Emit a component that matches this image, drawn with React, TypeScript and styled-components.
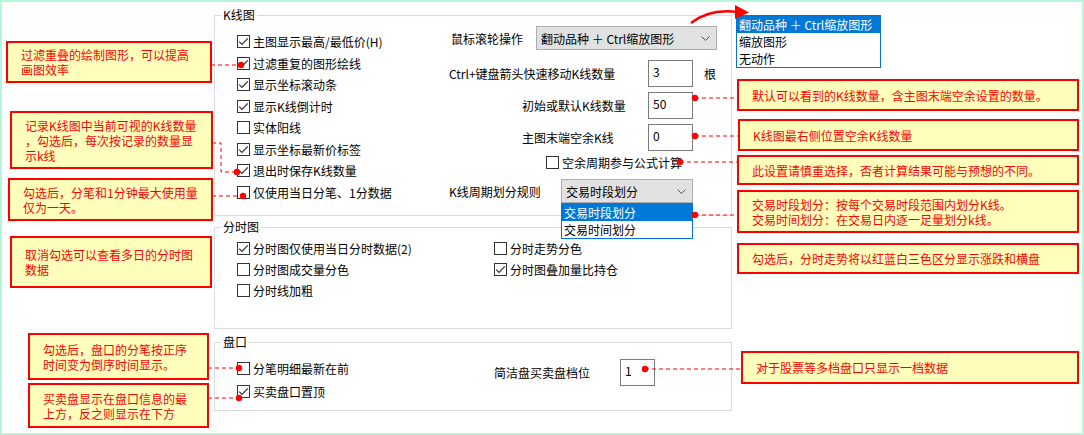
import React from "react";
import styled, { createGlobalStyle } from "styled-components";

const GlobalStyle = createGlobalStyle`
  html, body { margin: 0; padding: 0; background: #fff; }
  body {
    font-family: "Noto Sans CJK SC", "Noto Sans", sans-serif;
    font-size: 12px;
    color: #000;
  }
  * { box-sizing: border-box; }
`;

const Canvas = styled.div`
  position: relative;
  width: 1084px;
  height: 435px;
  border: 2px solid #b5f5d9;
  background: #fff;
  overflow: hidden;
`;

/* settings dialog, laid out by flow */
const Dialog = styled.div`
  margin-left: 212px;
  padding-top: 5px;
  width: 518px;
  display: flex;
  flex-direction: column;
`;

const Group = styled.fieldset<{ $h: number; $mt?: number }>`
  margin: ${(p) => p.$mt ?? 0}px 0 0;
  padding: 0;
  min-width: 0;
  height: ${(p) => p.$h}px;
  border: 1px solid #dcdcdc;
`;

const Legend = styled.legend`
  margin-left: 6px;
  padding: 0 2px;
  line-height: 16px;
  font-size: 12px;
`;

const GroupBody = styled.div`
  display: flex;
`;

const Col = styled.div<{ $w?: number; $pl?: number; $pt?: number }>`
  display: flex;
  flex-direction: column;
  width: ${(p) => (p.$w ? `${p.$w}px` : "auto")};
  padding-left: ${(p) => p.$pl ?? 0}px;
  padding-top: ${(p) => p.$pt ?? 0}px;
`;

const Row = styled.div<{ $h: number; $pl?: number; $mt?: number }>`
  display: flex;
  align-items: center;
  gap: 3px;
  height: ${(p) => p.$h}px;
  padding-left: ${(p) => p.$pl ?? 0}px;
  margin-top: ${(p) => p.$mt ?? 0}px;
  white-space: nowrap;
`;

const Box = styled.span`
  display: inline-flex;
  align-items: center;
  justify-content: center;
  width: 13px;
  height: 13px;
  border: 1px solid #333;
  background: #fff;
  flex: none;
`;

const Field = styled.div<{ $mt: number }>`
  display: flex;
  align-items: center;
  margin-top: ${(p) => p.$mt}px;
  position: relative;
  white-space: nowrap;
`;

const Label = styled.span<{ $w: number; $indent?: number }>`
  width: ${(p) => p.$w}px;
  padding-left: ${(p) => p.$indent ?? 0}px;
  flex: none;
`;

const Input = styled.div<{ $w: number }>`
  width: ${(p) => p.$w}px;
  height: 27px;
  border: 1px solid #7a7a7a;
  background: #fff;
  padding: 3px 0 0 4px;
  line-height: 16px;
  flex: none;
`;

const Unit = styled.span`
  margin-left: 11px;
`;

const Combo = styled.div<{ $w: number }>`
  position: relative;
  display: flex;
  align-items: center;
  justify-content: space-between;
  width: ${(p) => p.$w}px;
  height: 24px;
  padding: 0 6px 0 4px;
  background: #e1e1e1;
  border: 1px solid #adadad;
  flex: none;
`;

const DropList = styled.div<{ $w: number }>`
  position: absolute;
  z-index: 3;
  width: ${(p) => p.$w}px;
  border: 1px solid #0078d7;
  background: #fff;
  padding: 0;
`;

const UnderCombo = styled(DropList)`
  top: 23px;
  left: -1px;
`;

const FloatingList = styled(DropList)`
  top: 13px;
  left: 734px;
`;

const Option = styled.div<{ $sel?: boolean }>`
  height: 17px;
  line-height: 17px;
  padding-left: 2px;
  background: ${(p) => (p.$sel ? "#0078d7" : "transparent")};
  color: ${(p) => (p.$sel ? "#fff" : "#000")};
  white-space: nowrap;
`;

/* callouts placed over the canvas */
const Note = styled.div<{ $x: number; $y: number; $w: number; $h: number }>`
  position: absolute;
  z-index: 2;
  left: ${(p) => p.$x - 2}px;
  top: ${(p) => p.$y - 2}px;
  width: ${(p) => p.$w}px;
  height: ${(p) => p.$h}px;
  display: flex;
  align-items: center;
  padding: 0 0 0 13px;
  background: #ffffbb;
  border: 2px solid #ff0000;
  color: #ff0000;
  font-size: 12px;
  line-height: 15px;
  white-space: nowrap;
`;

const Wires = styled.svg`
  position: absolute;
  z-index: 4;
  left: -2px;
  top: -2px;
  pointer-events: none;
`;

const Chevron = () => (
  <svg width="9" height="5" viewBox="0 0 9 5">
    <path d="M0.5 0.5 L4.5 4.5 L8.5 0.5" fill="none" stroke="#555" strokeWidth="1" />
  </svg>
);

const Check = ({ label, on, h = 21.5, pl, mt }: { label: string; on?: boolean; h?: number; pl?: number; mt?: number }) => (
  <Row $h={h} $pl={pl} $mt={mt}>
    <Box>
      {on && (
        <svg width="11" height="11" viewBox="0 0 11 11">
          <path d="M1.2 5.6 L4 8.4 L9.8 2.4" fill="none" stroke="#333" strokeWidth="1.3" />
        </svg>
      )}
    </Box>
    <span>{label}</span>
  </Row>
);

const wires: { d: string; dot: [number, number] }[] = [
  { d: "M211 65 H241", dot: [241, 65] },
  { d: "M212 143 H221 V172 H237", dot: [237, 172] },
  { d: "M212 196 H243", dot: [243, 196] },
  { d: "M208 368 H239", dot: [239, 368] },
  { d: "M208 398 H239", dot: [239, 398] },
  { d: "M695 98 H737", dot: [695, 98] },
  { d: "M695 136 H738", dot: [695, 136] },
  { d: "M680 162 H737", dot: [680, 162] },
  { d: "M695 215 H737", dot: [695, 215] },
  { d: "M645 369 H741", dot: [645, 369] },
];

export default function App() {
  return (
    <>
      <GlobalStyle />
      <Canvas>
        <Dialog>
          <Group $h={209}>
            <Legend>K线图</Legend>
            <GroupBody>
              <Col $w={234} $pl={22} $pt={8}>
                <Check on label="主图显示最高/最低价(H)" />
                <Check on label="过滤重复的图形绘线" />
                <Check on label="显示坐标滚动条" />
                <Check on label="显示K线倒计时" />
                <Check label="实体阳线" />
                <Check on label="显示坐标最新价标签" />
                <Check on label="退出时保存K线数量" />
                <Check label="仅使用当日分笔、1分数据" />
              </Col>
              <Col>
                <Field $mt={3}>
                  <Label $w={87} $indent={2}>鼠标滚轮操作</Label>
                  <Combo $w={181}>
                    <span>翻动品种 ＋ Ctrl缩放图形</span>
                    <Chevron />
                  </Combo>
                </Field>
                <Field $mt={10}>
                  <Label $w={199}>Ctrl+键盘箭头快速移动K线数量</Label>
                  <Input $w={45}>3</Input>
                  <Unit>根</Unit>
                </Field>
                <Field $mt={5}>
                  <Label $w={199} $indent={73}>初始或默认K线数量</Label>
                  <Input $w={45}>50</Input>
                </Field>
                <Field $mt={5}>
                  <Label $w={199} $indent={73}>主图末端空余K线</Label>
                  <Input $w={45}>0</Input>
                </Field>
                <Check h={16} pl={97} mt={3} label="空余周期参与公式计算" />
                <Field $mt={9}>
                  <Label $w={112}>K线周期划分规则</Label>
                  <Combo $w={132}>
                    <span>交易时段划分</span>
                    <Chevron />
                    <UnderCombo $w={132}>
                      <Option $sel>交易时段划分</Option>
                      <Option>交易时间划分</Option>
                    </UnderCombo>
                  </Combo>
                </Field>
              </Col>
            </GroupBody>
          </Group>

          <Group $h={110} $mt={3}>
            <Legend>分时图</Legend>
            <GroupBody>
              <Col $w={279} $pl={22} $pt={2.5}>
                <Check h={21} on label="分时图仅使用当日分时数据(2)" />
                <Check h={21} label="分时图成交量分色" />
                <Check h={21} label="分时线加粗" />
              </Col>
              <Col $pt={2.5}>
                <Check h={21} label="分时走势分色" />
                <Check h={21} on label="分时图叠加量比持仓" />
              </Col>
            </GroupBody>
          </Group>

          <Group $h={77} $mt={5}>
            <Legend>盘口</Legend>
            <GroupBody>
              <Col $w={279} $pl={22} $pt={6.5}>
                <Check h={23} label="分笔明细最新在前" />
                <Check h={23} on label="买卖盘口置顶" />
              </Col>
              <Col $pt={9}>
                <Field $mt={0}>
                  <Label $w={126}>简洁盘买卖盘档位</Label>
                  <Input $w={35}>1</Input>
                </Field>
              </Col>
            </GroupBody>
          </Group>
        </Dialog>

        <FloatingList $w={145}>
          <Option $sel>翻动品种 ＋ Ctrl缩放图形</Option>
          <Option>缩放图形</Option>
          <Option>无动作</Option>
        </FloatingList>

        <Note $x={6} $y={41} $w={206} $h={42}>
          <div>过滤重叠的绘制图形，可以提高<br />画图效率</div>
        </Note>
        <Note $x={10} $y={111} $w={203} $h={58}>
          <div>记录K线图中当前可视的K线数量<br />，勾选后，每次按记录的数量显<br />示k线</div>
        </Note>
        <Note $x={8} $y={178} $w={205} $h={43}>
          <div>勾选后，分笔和1分钟最大使用量<br />仅为一天。</div>
        </Note>
        <Note $x={10} $y={236} $w={202} $h={52}>
          <div>取消勾选可以查看多日的分时图<br />数据</div>
        </Note>
        <Note $x={28} $y={333} $w={181} $h={47}>
          <div>勾选后，盘口的分笔按正序<br />时间变为倒序时间显示。</div>
        </Note>
        <Note $x={28} $y={383} $w={181} $h={45}>
          <div>买卖盘显示在盘口信息的最<br />上方，反之则显示在下方</div>
        </Note>

        <Note $x={737} $y={79} $w={342} $h={32}>
          <div>默认可以看到的K线数量，含主图末端空余设置的数量。</div>
        </Note>
        <Note $x={738} $y={119} $w={341} $h={32}>
          <div>K线图最右侧位置空余K线数量</div>
        </Note>
        <Note $x={737} $y={155} $w={342} $h={30}>
          <div>此设置请慎重选择，否者计算结果可能与预想的不同。</div>
        </Note>
        <Note $x={737} $y={190} $w={342} $h={43}>
          <div>交易时段划分：按每个交易时段范围内划分K线。<br />交易时间划分：在交易日内逐一足量划分k线。</div>
        </Note>
        <Note $x={737} $y={243} $w={342} $h={31}>
          <div>勾选后，分时走势将以红蓝白三色区分显示涨跌和横盘</div>
        </Note>
        <Note $x={741} $y={351} $w={338} $h={33}>
          <div>对于股票等多档盘口只显示一档数据</div>
        </Note>

        <Wires width="1084" height="435" viewBox="0 0 1084 435">
          {wires.map((w, i) => (
            <g key={i}>
              <path d={w.d} fill="none" stroke="#ff0000" strokeWidth="1" strokeDasharray="4 3" />
              <circle cx={w.dot[0]} cy={w.dot[1]} r="3.2" fill="#ff0000" />
            </g>
          ))}
          <path d="M691 23 Q 710 8 738 12" fill="none" stroke="#ff0000" strokeWidth="2.5" />
          <path d="M735 5 L749 12.5 L735 19 Z" fill="#ff0000" />
        </Wires>
      </Canvas>
    </>
  );
}
